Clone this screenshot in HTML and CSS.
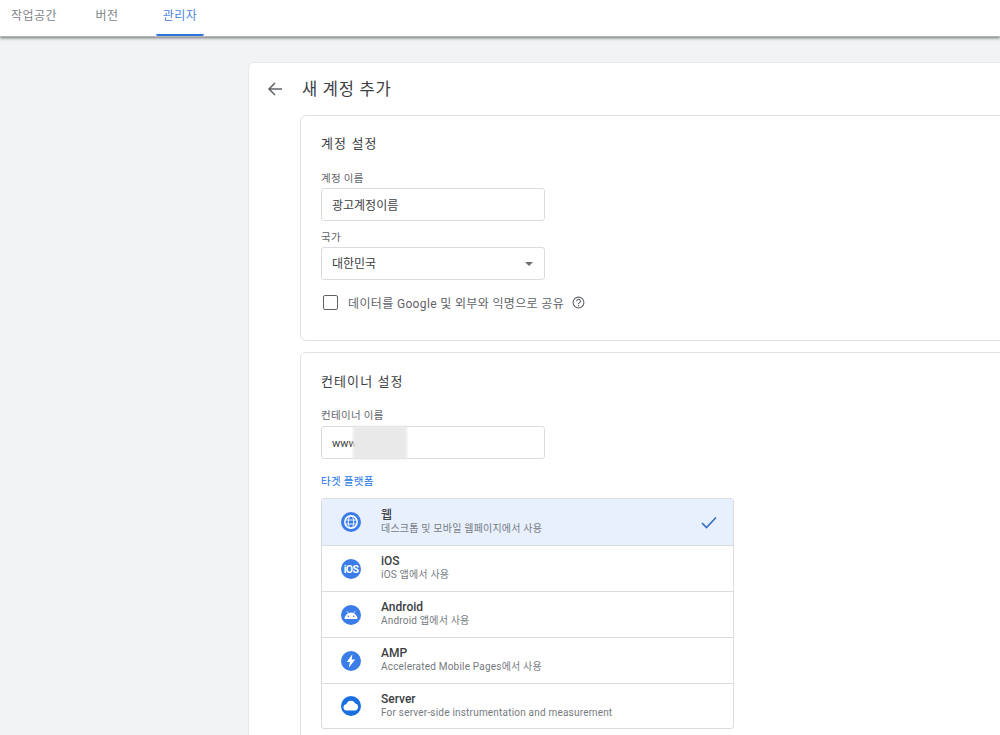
FILE: index.html
```html
<!DOCTYPE html>
<html lang="ko">
<head>
<meta charset="utf-8">
<title>새 계정 추가</title>
<link rel="stylesheet" href="styles.css">
</head>
<body>
<header class="topbar">
  <nav class="tabs">
    <a class="tab tab-work">작업공간</a>
    <a class="tab tab-ver">버전</a>
    <a class="tab tab-admin active">관리자</a>
  </nav>
</header>
<main class="main">
  <section class="sheet">
    <div class="sheet-head">
      <svg class="back" viewBox="0 0 16 16" width="16" height="16"><path d="M15 8H2M8 2 2 8l6 6" fill="none" stroke="#5f6368" stroke-width="1.5"/></svg>
      <h1 class="sheet-title">새 계정 추가</h1>
    </div>
    <div class="panel panel-account">
      <h2 class="panel-title">계정 설정</h2>
      <label class="field-label">계정 이름</label>
      <div class="input">광고계정이름</div>
      <label class="field-label label-country">국가</label>
      <div class="input select">대한민국<span class="caret"></span></div>
      <div class="check-row">
        <span class="checkbox"></span>
        <span class="check-text">데이터를 Google 및 외부와 익명으로 공유</span>
        <svg class="help" viewBox="0 0 24 24" width="13" height="13"><circle cx="12" cy="12" r="10" fill="none" stroke="#5f6368" stroke-width="2"/><path d="M8.6 9.6a3.4 3.4 0 1 1 5.4 2.7c-1.3.9-2 1.4-2 3" fill="none" stroke="#5f6368" stroke-width="2"/><circle cx="12" cy="18" r="1.3" fill="#5f6368"/></svg>
      </div>
    </div>
    <div class="panel panel-container">
      <h2 class="panel-title">컨테이너 설정</h2>
      <label class="field-label">컨테이너 이름</label>
      <div class="input input-www">www<span class="smudge"></span></div>
      <div class="target-label">타겟 플랫폼</div>
      <ul class="platforms">
        <li class="platform selected">
          <svg class="p-icon" viewBox="0 0 20 20" width="20" height="20"><circle cx="10" cy="10" r="10" fill="#3b7de8"/><g fill="none" stroke="#fff"><circle cx="10" cy="10" r="6.2" stroke-width="1.5"/><ellipse cx="10" cy="10" rx="2.7" ry="6.2" stroke-width=".9"/><path d="M4 8h12M4 12h12" stroke-width=".9"/></g></svg>
          <div class="p-text"><div class="p-name">웹</div><div class="p-desc">데스크톱 및 모바일 웹페이지에서 사용</div></div>
          <svg class="check" viewBox="0 0 16 13" width="16" height="13"><path d="M1 7l4.5 4.5L15 1.5" fill="none" stroke="#3a6fc9" stroke-width="1.7"/></svg>
        </li>
        <li class="platform">
          <svg class="p-icon" viewBox="0 0 20 20" width="20" height="20"><circle cx="10" cy="10" r="10" fill="#3b7de8"/><text class="ios-glyph" x="10" y="13.6" text-anchor="middle">iOS</text></svg>
          <div class="p-text"><div class="p-name">iOS</div><div class="p-desc">iOS 앱에서 사용</div></div>
        </li>
        <li class="platform">
          <svg class="p-icon" viewBox="0 0 20 20" width="20" height="20"><circle cx="10" cy="10" r="10" fill="#3b7de8"/><path d="M3.6 14a6.4 6.4 0 0 1 12.8 0z" fill="#fff"/><circle cx="7.3" cy="11.3" r=".8" fill="#3b7de8"/><circle cx="12.7" cy="11.3" r=".8" fill="#3b7de8"/><path d="M6 6.2l1.4 2.2M14 6.2l-1.4 2.2" stroke="#fff" stroke-width=".8"/></svg>
          <div class="p-text"><div class="p-name">Android</div><div class="p-desc">Android 앱에서 사용</div></div>
        </li>
        <li class="platform">
          <svg class="p-icon" viewBox="0 0 20 20" width="20" height="20"><circle cx="10" cy="10" r="10" fill="#3b7de8"/><path d="M11.3 3.3 5.8 11h3.1l-1.2 5.7L14.2 8.4H10.8z" fill="#fff"/></svg>
          <div class="p-text"><div class="p-name">AMP</div><div class="p-desc">Accelerated Mobile Pages에서 사용</div></div>
        </li>
        <li class="platform">
          <svg class="p-icon" viewBox="0 0 20 20" width="20" height="20"><circle cx="10" cy="10" r="10" fill="#1a6fe0"/><path d="M5.8 14.4a3.1 3.1 0 0 1-.4-6.2 4.8 4.8 0 0 1 9-.6 3.5 3.5 0 0 1 .2 6.8z" fill="#fff"/></svg>
          <div class="p-text"><div class="p-name">Server</div><div class="p-desc">For server-side instrumentation and measurement</div></div>
        </li>
      </ul>
    </div>
  </section>
</main>
</body>
</html>
```

FILE: styles.css
```css
* { box-sizing: border-box; }
html, body { margin: 0; padding: 0; height: 735px; overflow: hidden; }
body {
  background: #f1f3f4;
  color: #202124;
  font-family: Roboto, "Noto Sans CJK KR", sans-serif;
}
.topbar {
  height: 37px;
  background: #fff;
  box-shadow: 0 1px 3px rgba(60, 64, 67, .75);
  border-bottom: 1px solid #b5b7b9;
  position: relative;
}
.tabs { display: flex; height: 36px; padding-left: 5px; }
.tab {
  font-size: 12px;
  line-height: 32px;
  color: #80868b;
  text-align: center;
  letter-spacing: .5px;
}
.tab-work { width: 58px; }
.tab-ver { width: 44px; margin-left: 22px; }
.tab-admin { width: 48px; margin-left: 27px; }
.tab.active { color: #4a84e0; border-bottom: 2px solid #2f74dd; border-radius: 0 0 2px 2px; height: 36px; }
.main { padding: 25px 0 0 248px; }
.sheet {
  width: 780px;
  height: 700px;
  background: #fff;
  border: 1px solid #e6e8ea;
  border-radius: 6px;
  padding: 0 0 0 51px;
}
.sheet-head { display: flex; align-items: center; height: 52px; margin-left: -33px; }
.back { margin-right: 19px; }
.sheet-title { margin: 0; padding-bottom: 2px; font-size: 16.5px; font-weight: 400; color: #3c4043; letter-spacing: .75px; }
.panel {
  background: #fff;
  border: 1px solid #dfe1e4;
  border-radius: 6px;
  padding: 0 0 0 20px;
}
.panel-account { height: 226px; margin-bottom: 11px; }
.panel-container { height: 400px; }
.panel-title { margin: 0; font-weight: 400; font-size: 13px; line-height: 18px; color: #3c4043; padding-top: 19px; letter-spacing: 1.1px; }
.field-label { display: block; font-size: 10.5px; line-height: 14px; color: #5f6368; margin-top: 19px; letter-spacing: .3px; }
.label-country { margin-top: 10px; }
.input {
  width: 224px;
  height: 33px;
  margin-top: 2px;
  border: 1px solid #dadce0;
  border-radius: 3px;
  padding-left: 10px;
  font-size: 12px;
  line-height: 35px;
  color: #3c4043;
  position: relative;
}
.select { margin-top: 2px; line-height: 33px; }
.caret {
  position: absolute;
  right: 11px;
  top: 14px;
  border-left: 4px solid transparent;
  border-right: 4px solid transparent;
  border-top: 4px solid #6b6f74;
}
.check-row { display: flex; align-items: center; margin: 14px 0 0 2px; height: 16px; }
.checkbox { width: 15px; height: 15px; border: 1.5px solid #5f6368; border-radius: 2px; margin-right: 10px; }
.check-text { font-size: 12px; color: #5f6368; letter-spacing: .35px; margin-right: 8px; }
.panel-container .panel-title { padding-top: 20px; }
.panel-container .field-label { margin-top: 18px; }
.input-www { font-size: 11px; margin-top: 3px; line-height: 33px; }
.smudge {
  position: absolute;
  left: 31px;
  top: -1px;
  width: 54px;
  height: 33px;
  background: #e9e9e9;
  filter: blur(1.5px);
}
.target-label { font-size: 10.5px; color: #1a73e8; line-height: 14px; margin-top: 16px; letter-spacing: .3px; }
.platforms {
  list-style: none;
  margin: 9px 0 0;
  padding: 0;
  width: 413px;
  border: 1px solid #dadce0;
  border-radius: 3px;
}
.platform {
  display: flex;
  align-items: center;
  height: 46px;
  padding-left: 19px;
  border-bottom: 1px solid #dadce0;
  position: relative;
}
.platform:first-child { height: 47px; }
.platform:last-child { border-bottom: 0; height: 44px; }
.selected { background: #e8f0fe; }
.p-text { margin-left: 20px; margin-bottom: 2px; }
.p-name { font-size: 12px; line-height: 14px; font-weight: 500; color: #3c4043; }
.p-desc { font-size: 10px; line-height: 13px; color: #757a80; letter-spacing: .2px; }
.check { position: absolute; right: 16px; top: 17px; }
.ios-glyph { font-family: Roboto, sans-serif; font-size: 10.5px; font-weight: 700; fill: #fff; letter-spacing: -.6px; }
```
